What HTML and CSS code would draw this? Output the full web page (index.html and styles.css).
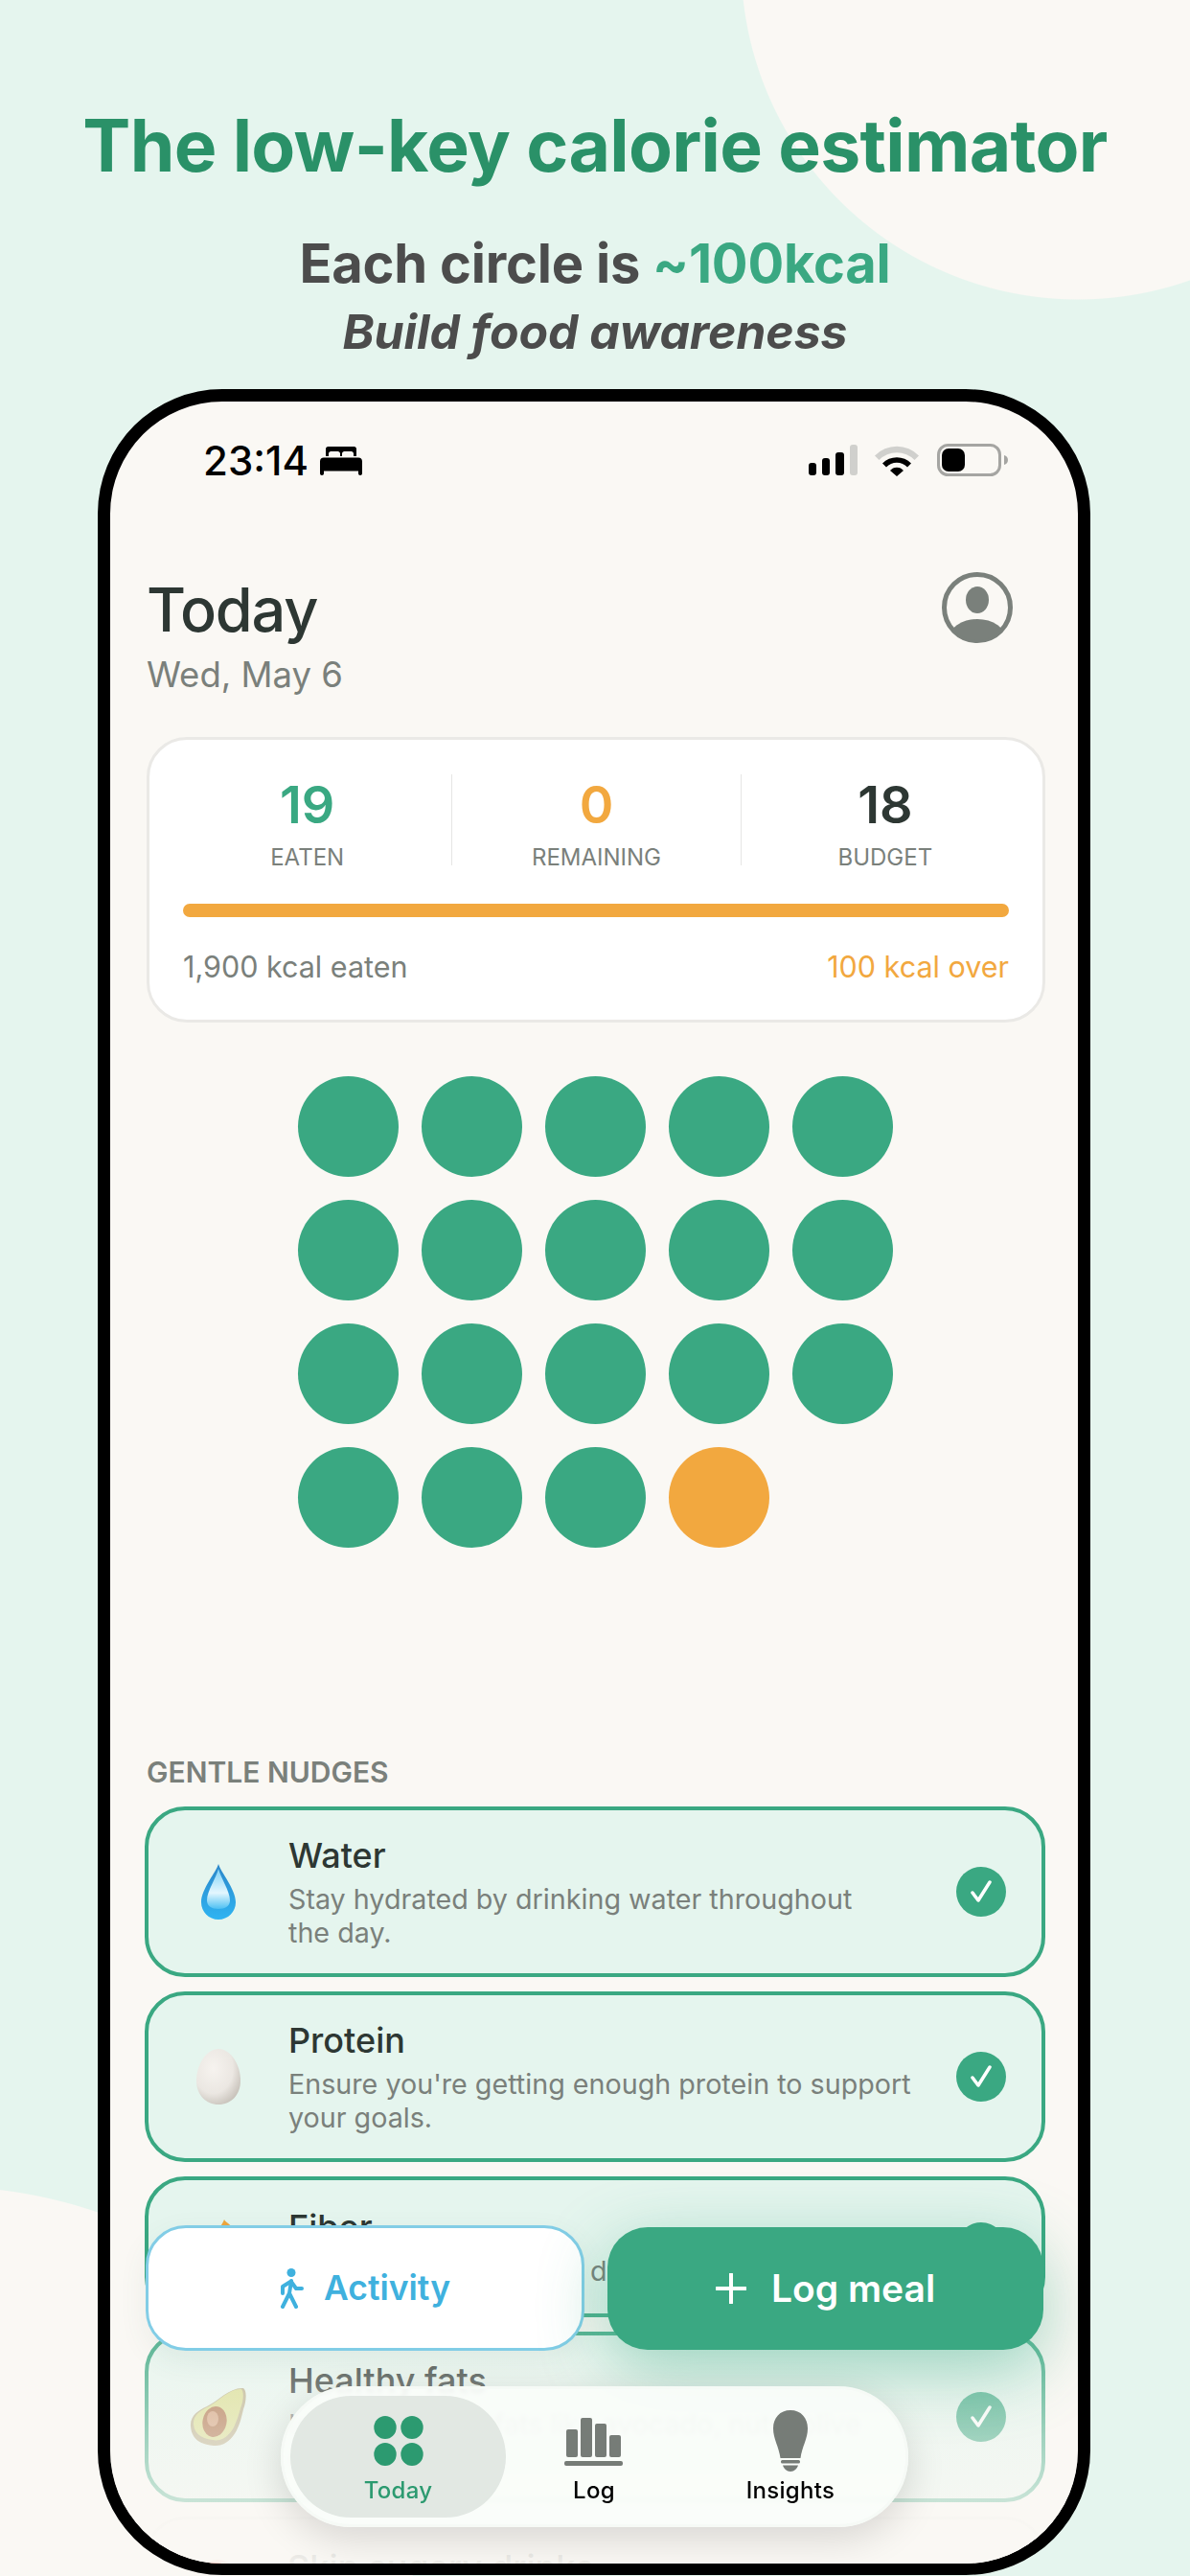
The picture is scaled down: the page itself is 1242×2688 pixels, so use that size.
FILE: index.html
```html
<!DOCTYPE html>
<html lang="en">
<head>
    <meta charset="UTF-8">
    <title>Today</title>
    <link rel="stylesheet" href="styles.css">
</head>
<body>
<header class="promo">
    <h1>The low-key calorie estimator</h1>
    <h2>Each circle is <span>~100kcal</span></h2>
    <h3>Build food awareness</h3>
</header>

<div class="phone">
    <div class="screen">
        <div class="status">
            <div class="clock">
                <span>23:14</span>
                <svg width="44" height="30" viewBox="0 0 44 30"><path d="M6 2.500C6 1 7 0 8.500 0h27C37 0 38 1 38 2.500V10h-3V7.500C35 6 34 5 32.500 5h-7C24 5 23 6 23 7.500V10h-2V7.500C21 6 20 5 18.500 5h-7C10 5 9 6 9 7.500V10H6zM4 11.500h36c2.500 0 4 1.500 4 4V28c0 1.200-.8 2-2 2s-2-.8-2-2v-2.500H4V28c0 1.200-.8 2-2 2s-2-.8-2-2V15.500c0-2.500 1.500-4 4-4z"/></svg>
            </div>
            <svg width="208" height="34" viewBox="0 0 208 34">
                <rect x="0" y="20" width="8" height="13" rx="3"/>
                <rect x="14" y="15" width="8" height="18" rx="3"/>
                <rect x="28" y="9" width="9" height="24" rx="3"/>
                <rect x="43" y="1" width="8" height="32" rx="3" fill="#d0d0cd"/>
                <path d="M69 12.500a32 32 0 0 1 46 0l-4.500 4.500a26 26 0 0 0-37 0z" fill="#d0d0cd"/>
                <path d="M77 20.500a21 21 0 0 1 30 0l-4 4a15 15 0 0 0-22 0zM85 28a9 9 0 0 1 14 0l-7 6z"/>
                <rect x="135.500" y="1.500" width="64" height="31" rx="10" fill="none" stroke="#a5a5a2" stroke-width="3"/>
                <rect x="139" y="5" width="24" height="24" rx="7"/>
                <path d="M204 12c2.500 .6 4 2.500 4 5s-1.500 4.400-4 5z" fill="#a5a5a2"/>
            </svg>
        </div>

        <div class="head">
            <div>
                <div class="head-title">Today</div>
                <div class="head-date">Wed, May 6</div>
            </div>
            <svg class="avatar" width="74" height="74" viewBox="0 0 74 74">
                <defs><clipPath id="ring"><circle cx="37" cy="37" r="34"/></clipPath></defs>
                <circle cx="37" cy="37" r="34.500" fill="none" stroke="#7a807b" stroke-width="5"/>
                <ellipse cx="37" cy="29" rx="12" ry="14" fill="#7a807b"/>
                <ellipse cx="37" cy="70" rx="30" ry="21" fill="#7a807b" clip-path="url(#ring)"/>
            </svg>
        </div>

        <section class="summary">
            <div class="stats">
                <div class="stat">
                    <div class="stat-num green">19</div>
                    <div class="stat-label">EATEN</div>
                </div>
                <div class="stat">
                    <div class="stat-num orange">0</div>
                    <div class="stat-label">REMAINING</div>
                </div>
                <div class="stat">
                    <div class="stat-num">18</div>
                    <div class="stat-label">BUDGET</div>
                </div>
            </div>
            <div class="bar"></div>
            <div class="summary-foot">
                <span>1,900 kcal eaten</span>
                <span class="orange">100 kcal over</span>
            </div>
        </section>

        <div class="dots">
            <i></i><i></i><i></i><i></i><i></i>
            <i></i><i></i><i></i><i></i><i></i>
            <i></i><i></i><i></i><i></i><i></i>
            <i></i><i></i><i></i><i class="over"></i>
        </div>

        <div class="section-label">GENTLE NUDGES</div>

        <div class="nudges">
            <div class="nudge">
                <div class="nudge-icon">
                    <svg width="36" height="58" viewBox="0 0 36 58">
                        <defs>
                            <linearGradient id="dropA" x1="0" y1="0" x2="0" y2="1"><stop offset="0" stop-color="#2b86c9"/><stop offset="1" stop-color="#2fb4f2"/></linearGradient>
                            <linearGradient id="dropB" x1="0" y1="0" x2="0" y2="1"><stop offset="0" stop-color="#7fd2f7"/><stop offset=".6" stop-color="#e4f7fe"/><stop offset="1" stop-color="#4cc0f3"/></linearGradient>
                        </defs>
                        <path d="M18 0C20 8 36 26 36 40c0 10-8 18-18 18S0 50 0 40C0 26 16 8 18 0z" fill="url(#dropA)"/>
                        <path d="M18 5C20 14 30 28 30 38c0 6-5 9-12 9S6 44 6 38C6 28 16 14 18 5z" fill="url(#dropB)"/>
                    </svg>
                </div>
                <div class="nudge-body">
                    <div class="nudge-title">Water</div>
                    <div class="nudge-desc">Stay hydrated by drinking water throughout<br>the day.</div>
                </div>
                <div class="tick"><svg width="30" height="30" viewBox="0 0 30 30"><path d="M6 16l6 8L24 5" fill="none" stroke="#fff" stroke-width="3.500" stroke-linecap="round" stroke-linejoin="round"/></svg></div>
            </div>
            <div class="nudge">
                <div class="nudge-icon">
                    <svg width="46" height="58" viewBox="0 0 46 58">
                        <defs><radialGradient id="egg" cx=".38" cy=".35" r=".75"><stop offset="0" stop-color="#f6f3ef"/><stop offset=".6" stop-color="#ebe7e2"/><stop offset="1" stop-color="#c2bcb4"/></radialGradient></defs>
                        <path d="M23 0c13 0 23 17 23 33 0 15-10 25-23 25S0 48 0 33C0 17 10 0 23 0z" fill="url(#egg)"/>
                    </svg>
                </div>
                <div class="nudge-body">
                    <div class="nudge-title">Protein</div>
                    <div class="nudge-desc">Ensure you're getting enough protein to support<br>your goals.</div>
                </div>
                <div class="tick"><svg width="30" height="30" viewBox="0 0 30 30"><path d="M6 16l6 8L24 5" fill="none" stroke="#fff" stroke-width="3.500" stroke-linecap="round" stroke-linejoin="round"/></svg></div>
            </div>
            <div class="nudge">
                <div class="nudge-icon">
                    <svg width="44" height="58" viewBox="0 0 44 58">
                        <path d="M2 18c6 4 10 10 12 18l-10 10z" fill="#9cc04a"/>
                        <path d="M28 0c2 4 10 6 10 14s-6 14-14 14S14 18 18 12c2 2 4 2 4 0 0-4 4-6 6-12z" fill="#f0a63c"/>
                    </svg>
                </div>
                <div class="nudge-body">
                    <div class="nudge-title">Fiber</div>
                    <div class="nudge-desc">Eat enough fiber to aid digestion.</div>
                </div>
                <div class="tick"><svg width="30" height="30" viewBox="0 0 30 30"><path d="M6 16l6 8L24 5" fill="none" stroke="#fff" stroke-width="3.500" stroke-linecap="round" stroke-linejoin="round"/></svg></div>
            </div>
            <div class="nudge">
                <div class="nudge-icon">
                    <svg width="60" height="62" viewBox="0 0 60 62">
                        <path d="M56 1c4 3 3 14 0 22-2 8-3 14-7 22-5 10-14 17-24 16C11 60 2 54 1 41c-1-11 8-17 17-21C30 14 42 0 56 1z" fill="#b5ac86"/>
                        <path d="M54 2c3 3 2 13-1 20-2 8-4 13-7 20-5 9-13 15-22 13C13 54 5 49 4 39c-1-9 7-15 16-19C31 14 42 1 54 2z" fill="#d6dc8c"/>
                        <ellipse cx="26" cy="36" rx="12.500" ry="16" transform="rotate(12 26 36)" fill="#a86a3f"/>
                        <ellipse cx="24" cy="33" rx="6" ry="8" fill="#cf9a73"/>
                    </svg>
                </div>
                <div class="nudge-body">
                    <div class="nudge-title">Healthy fats</div>
                    <div class="nudge-desc">Include healthy fats like avocado, nuts, olive<br>oil and seeds.</div>
                </div>
                <div class="tick"><svg width="30" height="30" viewBox="0 0 30 30"><path d="M6 16l6 8L24 5" fill="none" stroke="#fff" stroke-width="3.500" stroke-linecap="round" stroke-linejoin="round"/></svg></div>
            </div>
            <div class="nudge nudge-off">
                <div class="nudge-icon">
                    <svg width="44" height="58" viewBox="0 0 44 58"><circle cx="22" cy="22" r="22" fill="#ec6a5e"/></svg>
                </div>
                <div class="nudge-body">
                    <div class="nudge-title">Skip sugary drinks</div>
                    <div class="nudge-desc">Swap soda for water or tea.</div>
                </div>
            </div>
        </div>

        <div class="fade"></div>

        <div class="actions">
            <div class="btn btn-activity">
                <svg width="26" height="42" viewBox="0 0 26 42" fill="none" stroke="#3fb1de" stroke-width="4" stroke-linecap="round" stroke-linejoin="round">
                    <circle cx="12" cy="4.500" r="4.500" fill="#3fb1de" stroke="none"/>
                    <path d="M12 13L10 26l7 14M10 26L3 40"/>
                    <path d="M11 14L3 19v7M12 14l5 7h6"/>
                </svg>
                <span>Activity</span>
            </div>
            <div class="btn btn-log">
                <svg width="32" height="32" viewBox="0 0 32 32"><path d="M16 1v30M1 16h30" fill="none" stroke="#fff" stroke-width="4" stroke-linecap="round"/></svg>
                <span>Log meal</span>
            </div>
        </div>

        <nav class="tabs">
            <div class="tab tab-on">
                <svg width="62" height="64" viewBox="0 0 62 64" fill="#2c9a70">
                    <ellipse cx="17" cy="18" rx="11.700" ry="12"/>
                    <ellipse cx="45" cy="18" rx="11.700" ry="12"/>
                    <ellipse cx="17" cy="46" rx="11.700" ry="12"/>
                    <ellipse cx="45" cy="46" rx="11.700" ry="12"/>
                </svg>
                <span>Today</span>
            </div>
            <div class="tab">
                <svg width="62" height="64" viewBox="0 0 62 64" fill="#767c77">
                    <rect x="2" y="20" width="12" height="29" rx="2"/>
                    <rect x="17" y="8" width="12" height="41" rx="2"/>
                    <rect x="32" y="14" width="12" height="35" rx="2"/>
                    <rect x="47" y="26" width="12" height="23" rx="2"/>
                    <rect x="0" y="53" width="61" height="5" rx="2"/>
                </svg>
                <span>Log</span>
            </div>
            <div class="tab">
                <svg width="62" height="64" viewBox="0 0 62 64" fill="#767c77">
                    <path d="M31 0c11 0 18 8 18 19 0 11-6 19-7.500 31h-21C19 38 13 30 13 19 13 8 20 0 31 0z"/>
                    <rect x="21" y="52" width="20" height="3.500" rx="1.500"/>
                    <path d="M23 57.500h16C38 61 35 64 31 64s-7-3-8-6.500z"/>
                </svg>
                <span>Insights</span>
            </div>
        </nav>
    </div>
</div>
</body>
</html>
```

FILE: styles.css
```css
* {
    box-sizing: border-box;
}

html, body {
    margin: 0;
    padding: 0;
}

body {
    width: 1242px;
    height: 2688px;
    overflow: hidden;
    background:
        radial-gradient(circle 352px at 1125px -39px, #faf8f4 99.7%, transparent 100%),
        radial-gradient(circle 500px at -60px 2781px, #faf8f4 99.8%, transparent 100%),
        #e5f5ee;
    font-family: Inter, "Liberation Sans", sans-serif;
    color: #2d3733;
}

/* promo text */
.promo {
    height: 406px;
    padding-top: 106px;
    text-align: center;
}

.promo h1 {
    margin: 0;
    font-size: 75px;
    line-height: 92px;
    font-weight: 700;
    letter-spacing: -.7px;
    color: #2a9168;
}

.promo h2 {
    margin: 45px 0 0;
    font-size: 56px;
    line-height: 64px;
    font-weight: 700;
    letter-spacing: -.2px;
    color: #4c4c4c;
}

.promo h2 span {
    color: #3aa882;
}

.promo h3 {
    margin: 11px 0 0;
    font-size: 50px;
    line-height: 56px;
    font-weight: 700;
    font-style: italic;
    letter-spacing: -.1px;
    color: #4c4c4c;
}

/* phone */
.phone {
    width: 1036px;
    height: 2281px;
    margin-left: 102px;
    border: 13px solid #000;
    border-bottom-width: 12px;
    border-radius: 130px;
    background: #faf8f4;
    overflow: hidden;
}

.screen {
    position: relative;
    height: 100%;
    padding: 0 34px 0 36px;
    overflow: hidden;
    border-radius: 117px;
}

.status {
    display: flex;
    justify-content: space-between;
    align-items: flex-start;
    height: 34px;
    margin: 44px 39px 0 61px;
}

.clock {
    display: flex;
    align-items: center;
    gap: 12px;
    height: 36px;
    color: #000;
    font-size: 42px;
    line-height: 36px;
    font-weight: 500;
}

.head {
    display: flex;
    justify-content: space-between;
    align-items: flex-start;
    margin: 103px 2px 0;
    padding-right: 32px;
}

.avatar {
    margin-top: -3px;
}

.head-title {
    font-size: 63px;
    line-height: 72px;
    font-weight: 500;
    letter-spacing: -1.2px;
}

.head-date {
    margin-top: 10px;
    font-size: 36.500px;
    line-height: 44px;
    color: #7a807b;
}

.summary {
    height: 298px;
    margin: 43px 0 0 2px;
    padding: 36px 35px 0;
    border: 3px solid #eae9e6;
    border-radius: 42px;
    background: #fff;
}

.stats {
    display: grid;
    grid-template-columns: repeat(3, 1fr);
    margin: 0 -21px;
}

.stat {
    height: 95px;
    text-align: center;
}

.stat + .stat {
    border-left: 1px solid #e6e6e4;
}

.stat-num {
    margin-top: 5px;
    font-size: 54px;
    line-height: 54px;
    font-weight: 600;
}

.stat-label {
    margin-top: 13px;
    font-size: 24px;
    line-height: 30px;
    color: #7a807b;
}

.green {
    color: #3aa882;
}

.orange {
    color: #f2a83f;
}

.bar {
    height: 14px;
    margin-top: 40px;
    border-radius: 7px;
    background: #f2a83f;
}

.summary-foot {
    display: flex;
    justify-content: space-between;
    margin-top: 32px;
    font-size: 30.500px;
    line-height: 40px;
    color: #7a807b;
}

.summary-foot .orange {
    color: #f2a83f;
}

.dots {
    display: grid;
    grid-template-columns: repeat(5, 105px);
    gap: 24px;
    width: 621px;
    margin: 56px auto 0;
}

.dots i {
    display: block;
    height: 105px;
    border-radius: 50%;
    background: #3aa882;
}

.dots i.over {
    background: #f2a83f;
}

.section-label {
    margin: 216px 0 0 2px;
    font-size: 30px;
    line-height: 36px;
    font-weight: 600;
    color: #7a807b;
}

.nudges {
    display: flex;
    flex-direction: column;
    gap: 15px;
    margin-top: 18px;
}

.nudge {
    display: flex;
    align-items: center;
    min-height: 147px;
    padding: 25px 37px 25px 0;
    border: 4px solid #3aa882;
    border-radius: 42px;
    background: #e5f5ee;
}

.nudge-off {
    border: 3px solid #efeeea;
    background: #faf8f4;
}

.nudge-icon {
    display: flex;
    justify-content: center;
    flex: none;
    width: 146px;
}

.nudge-body {
    flex: 1;
}

.nudge-title {
    font-size: 36px;
    line-height: 44px;
    font-weight: 500;
}

.nudge-desc {
    margin-top: 6px;
    font-size: 28.700px;
    line-height: 35px;
    color: #7a807b;
}

.tick {
    display: flex;
    align-items: center;
    justify-content: center;
    flex: none;
    width: 52px;
    height: 52px;
    border-radius: 50%;
    background: #3aa882;
}

.fade {
    position: absolute;
    left: 0;
    right: 0;
    bottom: 0;
    height: 290px;
    background: linear-gradient(rgba(250, 248, 244, 0), rgba(250, 248, 244, .35) 35%, rgba(250, 248, 244, .95));
}

/* floating buttons */
.actions {
    position: absolute;
    left: 37px;
    right: 36px;
    bottom: 222px;
    display: flex;
    align-items: center;
    gap: 24px;
}

.btn {
    display: flex;
    align-items: center;
    justify-content: center;
    flex: none;
    border-radius: 42px;
    font-weight: 600;
}

.btn-activity {
    width: 458px;
    height: 131px;
    gap: 20px;
    border: 3px solid #82cde6;
    background: #fff;
    color: #3fb1de;
    font-size: 35.500px;
    box-shadow: 0 10px 30px rgba(60, 100, 90, .08);
}

.btn-log {
    width: 455px;
    height: 128px;
    gap: 26px;
    background: #3aa882;
    color: #fff;
    font-size: 39px;
    box-shadow: 0 20px 70px rgba(58, 168, 130, .45);
}

/* tab bar */
.tabs {
    position: absolute;
    left: 178px;
    bottom: 38px;
    display: grid;
    grid-template-columns: 225px 184px 226px;
    width: 655px;
    height: 147px;
    padding: 7px;
    border: 3px solid #f6faf6;
    border-radius: 74px;
    background: rgba(250, 253, 250, .93);
    -webkit-backdrop-filter: blur(2px);
    backdrop-filter: blur(2px);
    box-shadow: 0 12px 40px rgba(0, 0, 0, .14);
}

.tab {
    display: flex;
    flex-direction: column;
    align-items: center;
    padding-top: 15px;
    color: #000;
    font-size: 24px;
    line-height: 30px;
    font-weight: 500;
    letter-spacing: .3px;
}

.tab span {
    margin-top: 5px;
}

.tab-on {
    border-radius: 64px;
    background: #e2e8e3;
    color: #2c9a70;
}
```
